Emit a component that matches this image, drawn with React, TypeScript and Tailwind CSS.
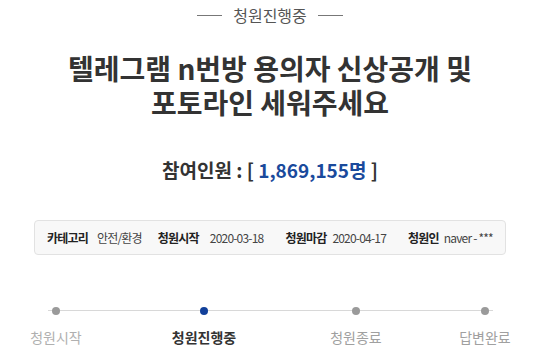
const font = { fontFamily: '"Noto Sans CJK KR", "Noto Sans", sans-serif' };

const steps = [
  { label: "청원시작", ml: "ml-[16px]", dot: "bg-[#9a9a9a]", text: "text-[#b0b0b0]" },
  { label: "청원진행중", ml: "ml-[68px]", dot: "bg-[#12409a]", text: "font-bold text-[#333]" },
  { label: "청원종료", ml: "ml-[72px]", dot: "bg-[#9a9a9a]", text: "text-[#a0a0a0]" },
  { label: "답변완료", ml: "ml-[49px]", dot: "bg-[#9a9a9a]", text: "text-[#a0a0a0]" },
];

export default function App() {
  return (
    <main
      className="flex h-[360px] w-[540px] flex-col items-center overflow-hidden bg-white text-[#333]"
      style={font}
    >
      <div className="mt-[5px] flex items-center gap-[11px] text-[16px] leading-[20px] text-[#555]">
        <span className="h-px w-[25px] bg-[#777]" />
        <span>청원진행중</span>
        <span className="h-px w-[25px] bg-[#777]" />
      </div>

      <h1 className="mt-[26px] text-center text-[28px] font-bold leading-[34px] text-[#333]">
        텔레그램 n번방 용의자 신상공개 및
        <br />
        포토라인 세워주세요
      </h1>

      <p className="mt-[38px] text-[19px] font-bold leading-[26px] text-[#333]">
        참여인원 : [ <span className="text-[#1a4a9c]">1,869,155명</span> ]
      </p>

      <div className="mt-[37px] flex h-[35px] w-[472px] items-center whitespace-nowrap rounded-[4px] border border-[#e2e2e2] bg-[#f8f8f8] pl-[12px] text-[12px] tracking-[-0.8px] text-[#444]">
        <b className="font-bold text-[#222]">카테고리</b>
        <span className="ml-[9px]">안전/환경</span>
        <b className="ml-[16px] font-bold text-[#222]">청원시작</b>
        <span className="ml-[11px]">2020-03-18</span>
        <b className="ml-[22px] font-bold text-[#222]">청원마감</b>
        <span className="ml-[6px]">2020-04-17</span>
        <b className="ml-[22px] font-bold text-[#222]">청원인</b>
        <span className="ml-[5px]">naver - ***</span>
      </div>

      <div className="relative mt-[52px] flex w-full">
        <div className="absolute left-[48px] top-[3px] h-px w-[445px] bg-[#d8d8d8]" />
        {steps.map((s) => (
          <div key={s.label} className={`relative flex w-[80px] flex-col items-center ${s.ml}`}>
            <span className={`h-[8px] w-[8px] rounded-full ${s.dot}`} />
            <span className={`mt-[12px] text-[14px] leading-[20px] ${s.text}`}>{s.label}</span>
          </div>
        ))}
      </div>
    </main>
  );
}
